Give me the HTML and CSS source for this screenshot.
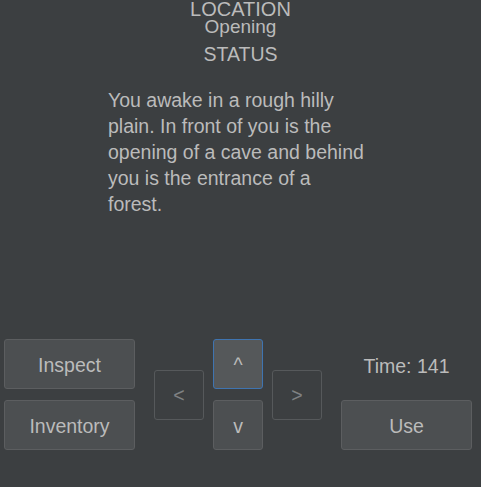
FILE: index.html
```html
<!DOCTYPE html>
<html>
<head>
<meta charset="utf-8">
<link rel="stylesheet" href="styles.css">
</head>
<body>
<div class="page">
  <div class="header">
    <div class="location">LOCATION</div>
    <div class="place">Opening</div>
    <div class="status">STATUS</div>
  </div>
  <div class="story">You awake in a rough hilly plain. In front of you is the opening of a cave and behind you is the entrance of a forest.</div>
  <div class="controls">
    <div class="col">
      <button class="btn">Inspect</button>
      <button class="btn">Inventory</button>
    </div>
    <div class="dpad">
      <button class="btn disabled left">&lt;</button>
      <button class="btn focused up">^</button>
      <button class="btn down">v</button>
      <button class="btn disabled right">&gt;</button>
    </div>
    <div class="col">
      <div class="time">Time: 141</div>
      <button class="btn">Use</button>
    </div>
  </div>
</div>
</body>
</html>
```
FILE: styles.css
```css
html, body {
  margin: 0;
  padding: 0;
  background: #3c3f41;
}
.page {
  width: 481px;
  height: 487px;
  display: flex;
  flex-direction: column;
  font-family: "Liberation Sans", Arial, sans-serif;
  color: #bbbbbb;
  overflow: hidden;
}
.header {
  display: flex;
  flex-direction: column;
  align-items: center;
}
.location {
  font-size: 20px;
  line-height: 19px;
}
.place {
  font-size: 19px;
  line-height: 15px;
}
.status {
  font-size: 19.5px;
  line-height: 22px;
  margin-top: 9px;
}
.story {
  margin-top: 22px;
  margin-left: 108px;
  width: 259px;
  font-size: 19.5px;
  line-height: 26px;
}
.controls {
  margin-top: auto;
  padding: 0 0 37px 4px;
  display: flex;
  column-gap: 19px;
}
.col {
  width: 131px;
  display: flex;
  flex-direction: column;
  row-gap: 11px;
}
.btn {
  box-sizing: border-box;
  height: 50px;
  margin: 0;
  padding: 1px 0 0;
  background: #4c4f51;
  border: 1px solid #5c5e60;
  border-radius: 3px;
  color: #bbbbbb;
  font-family: "Liberation Sans", Arial, sans-serif;
  font-size: 19.5px;
  line-height: 22px;
}
.dpad {
  width: 168px;
  display: grid;
  grid-template-columns: 50px 50px 50px;
  grid-template-rows: 50px 50px;
  column-gap: 9px;
  row-gap: 11px;
}
.dpad .btn {
  width: 50px;
}
.left {
  grid-column: 1;
  grid-row: 1 / span 2;
  align-self: center;
}
.right {
  grid-column: 3;
  grid-row: 1 / span 2;
  align-self: center;
}
.up {
  grid-column: 2;
  grid-row: 1;
}
.down {
  grid-column: 2;
  grid-row: 2;
}
.disabled {
  background: transparent;
  border-color: #56595b;
  color: #7f8183;
}
.focused {
  background: #55585a;
  border-color: #3f74b0;
}
.time {
  box-sizing: border-box;
  height: 50px;
  padding-top: 4px;
  display: flex;
  align-items: center;
  justify-content: center;
  font-size: 19.5px;
}
```
